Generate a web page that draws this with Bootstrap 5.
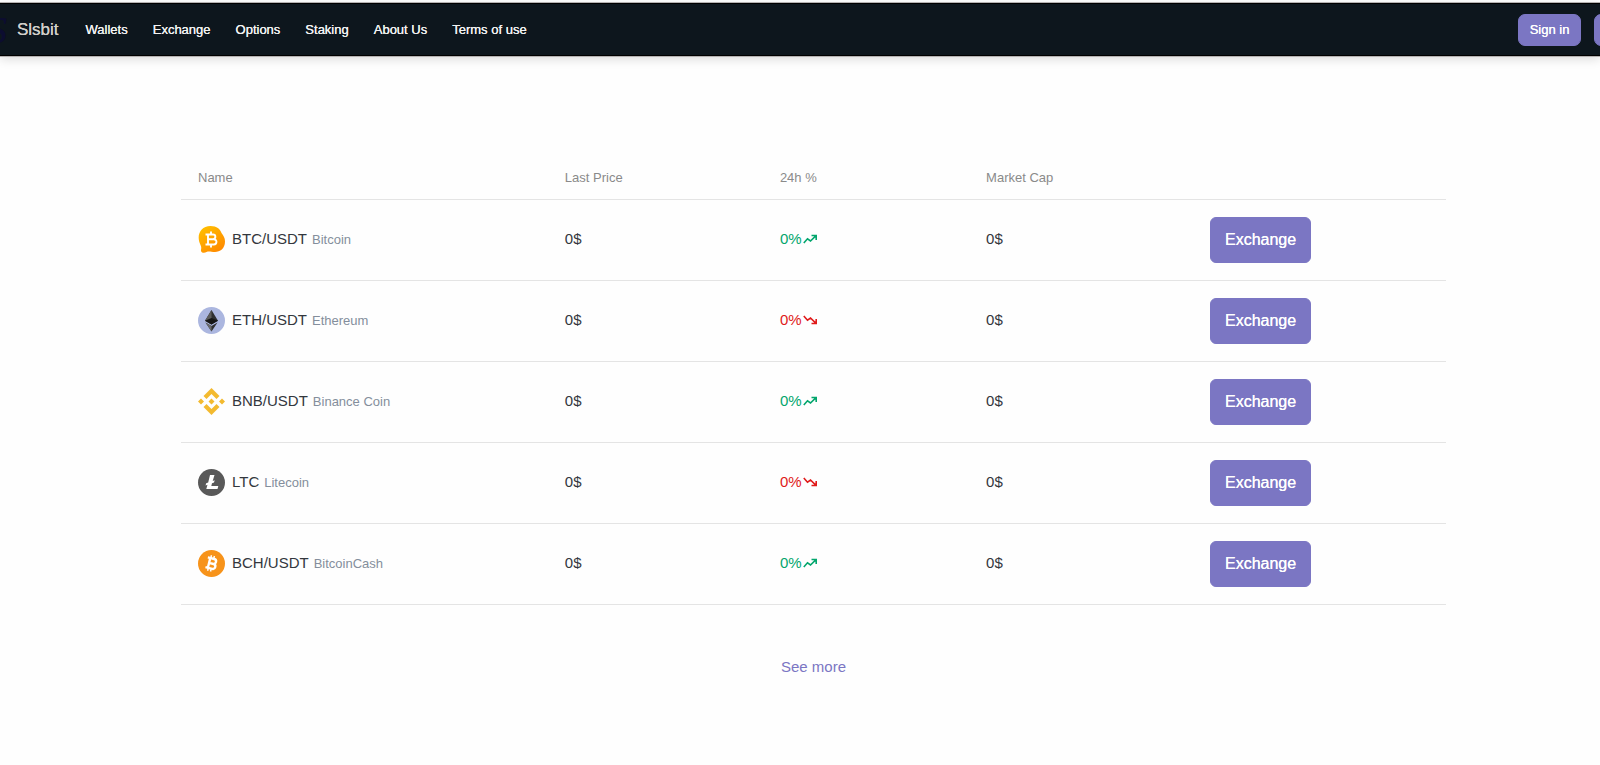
<!DOCTYPE html>
<html lang="en">
<head>
<meta charset="utf-8">
<meta name="viewport" content="width=device-width, initial-scale=1">
<title>Slsbit</title>
<link href="https://cdn.jsdelivr.net/npm/bootstrap@5.3.0/dist/css/bootstrap.min.css" rel="stylesheet">
<style>
  :root { --brand: #7b76c3; --ink: #33373d; --muted: #848e9c; }
  body { font-family: "Liberation Sans", Arial, sans-serif; font-size: 15px; color: var(--ink); background: #fefefe; overflow-x: hidden; }
  .topbar { height: 53px; margin-top: 3px; background: #0d161d; border-top: 1px solid #000; border-bottom: 1px solid #000; outline: 1px solid #b5b2b2; box-shadow: 0 3px 10px rgba(0,0,0,.14); overflow: hidden; }
  .topbar a, .topbar button { text-shadow: 0 0 0 currentColor; white-space: nowrap; }
  .brand-mark { font: italic 38px/1 "Liberation Serif", serif; color: #0c0d30; margin-left: -12px; width: 29px; }
  .brand-name { font-size: 17px; color: #d2cfca; }
  .menu { gap: 25px; margin-left: 27px; font-size: 13px; }
  .menu a { color: #f2f2f2; }
  .btn-brand { --bs-btn-color: #fff; --bs-btn-bg: var(--brand); --bs-btn-border-color: var(--brand); --bs-btn-hover-color: #fff; --bs-btn-hover-bg: #6a65b5; --bs-btn-hover-border-color: #6a65b5; --bs-btn-border-radius: 6px; font-size: 16px; height: 46px; padding: 0 14px; text-shadow: 0 0 0 currentColor; }
  .account { gap: 13px; margin-right: -57px; }
  .account .btn-brand { --bs-btn-border-radius: 7px; font-size: 13px; height: 32px; width: 63px; padding: 0; }
  .market { max-width: 1265px; margin: 95px auto 0; }
  .shift { padding-left: 27px; }
  .coins { table-layout: fixed; --bs-table-bg: transparent; --bs-table-color: var(--ink); border-color: #e4e4e4; }
  .coins > :not(caption) > * > * { padding: 0 17px; vertical-align: middle; }
  .coins > thead > tr > th { height: 48px; font-size: 13px; font-weight: 400; color: #8a8a8a; padding-top: 5px; }
  .coins td { height: 81px; }
  .coins .up { color: #03a66d; } .coins .down { color: #e01a1a; }
  .coin-icon { width: 27px; height: 27px; margin-right: 7px; }
  .trend { width: 14px; height: 10px; margin-left: 1px; vertical-align: 0; }
  .full-name { font-size: 13px; color: var(--muted); margin-left: 5px; }
  .more { color: var(--brand); margin-top: 51px; }
  .c1 { width: 29%; } .c2 { width: 17%; } .c3 { width: 16.3%; } .c4 { width: 17.7%; } .c5 { width: 20%; }
</style>
</head>
<body>
<svg class="d-none" aria-hidden="true">
  <symbol id="rise" viewBox="0 0 14 10"><path d="M.8 9 4.500 4.800 7.500 7 12.500 2.200M8.500 1.500h4.700v4.500" fill="none" stroke="currentColor" stroke-width="1.6"/></symbol>
  <symbol id="fall" viewBox="0 0 14 10"><path d="M.8 1 4.500 5.200 7.500 3 12.500 7.800M8.500 8.500h4.700V4" fill="none" stroke="currentColor" stroke-width="1.6"/></symbol>
</svg>

<nav class="topbar d-flex align-items-center">
  <a class="brand-mark flex-shrink-0 text-decoration-none" href="#" aria-label="Home">S</a>
  <a class="brand-name text-decoration-none" href="#">Slsbit</a>
  <div class="menu d-flex">
    <a class="text-decoration-none" href="#">Wallets</a>
    <a class="text-decoration-none" href="#">Exchange</a>
    <a class="text-decoration-none" href="#">Options</a>
    <a class="text-decoration-none" href="#">Staking</a>
    <a class="text-decoration-none" href="#">About Us</a>
    <a class="text-decoration-none" href="#">Terms of use</a>
  </div>
  <div class="account d-flex ms-auto flex-shrink-0">
    <button type="button" class="btn btn-brand">Sign in</button>
    <button type="button" class="btn btn-brand" aria-label="Register"></button>
  </div>
</nav>

<main class="shift">
  <section class="market">
    <table class="table coins mb-0">
      <thead>
        <tr><th class="c1" scope="col">Name</th><th class="c2" scope="col">Last Price</th><th class="c3" scope="col">24h %</th><th class="c4" scope="col">Market Cap</th><th class="c5"></th></tr>
      </thead>
      <tbody>
        <tr>
          <td><div class="d-flex align-items-center">
            <svg class="coin-icon" viewBox="0 0 27 27"><defs><linearGradient id="gold" x1="0" y1="0" x2=".7" y2="1"><stop offset="0" stop-color="#ffc400"/><stop offset="1" stop-color="#ff8a00"/></linearGradient></defs><path d="M12.500 0C19 0 22 3 23.500 7c2 3 3.500 5 3.500 8.500 0 7-5 10.500-10 10.500-4 0-6-1-8.500 0-2 1.500-6 1-5.500-2 .3-2 .5-3-.5-5C-2 10 2 0 12.500 0Z" fill="url(#gold)"/><path d="M7.500 8.500H15a2.200 2.200 0 0 1 0 4.700h-5 5.800a2.500 2.500 0 0 1 0 5.300H7.500M10 8.500v10M13 5.500v3M13 18.500v3" fill="none" stroke="#fff" stroke-width="1.900"/></svg>
            <span>BTC/USDT</span><span class="full-name">Bitcoin</span></div></td>
          <td>0$</td>
          <td class="up">0%<svg class="trend"><use href="#rise"/></svg></td>
          <td>0$</td>
          <td><button type="button" class="btn btn-brand">Exchange</button></td>
        </tr>
        <tr>
          <td><div class="d-flex align-items-center">
            <svg class="coin-icon" viewBox="0 0 27 27"><circle cx="13.500" cy="13.500" r="13.500" fill="#abb6df"/><path d="M13.500 3 20 13.800 13.500 17.500 7 13.800Z" fill="#2e2f31"/><path d="M13.500 3v14.500L7 13.800Z" fill="#5c5c5a"/><path d="M13.500 11 20 13.800 13.500 17.500 7 13.800Z" fill="#161616"/><path d="m7.500 15.500 6 3.500 6-3.500-6 9Z" fill="#303030"/><path d="m7.500 15.500 6 3.500v5.500Z" fill="#6a6b6d"/></svg>
            <span>ETH/USDT</span><span class="full-name">Ethereum</span></div></td>
          <td>0$</td>
          <td class="down">0%<svg class="trend"><use href="#fall"/></svg></td>
          <td>0$</td>
          <td><button type="button" class="btn btn-brand">Exchange</button></td>
        </tr>
        <tr>
          <td><div class="d-flex align-items-center">
            <svg class="coin-icon" viewBox="0 0 27 27" fill="#f3ba2f"><path d="m13.500 0 8 8-3 3-5-5-5 5-3-3ZM13.500 27l8-8-3-3-5 5-5-5-3 3ZM3 10.500l3 3-3 3-3-3ZM24 10.500l3 3-3 3-3-3ZM13.500 10.500l3 3-3 3-3-3Z"/></svg>
            <span>BNB/USDT</span><span class="full-name">Binance Coin</span></div></td>
          <td>0$</td>
          <td class="up">0%<svg class="trend"><use href="#rise"/></svg></td>
          <td>0$</td>
          <td><button type="button" class="btn btn-brand">Exchange</button></td>
        </tr>
        <tr>
          <td><div class="d-flex align-items-center">
            <svg class="coin-icon" viewBox="0 0 27 27"><circle cx="13.500" cy="13.500" r="13.500" fill="#595959"/><path d="M12 6h4.500l-1.800 6 2-.8-.7 2.200-2 .8-.7 2.800h7l-.8 3H8.300l1.200-4.300-2 .8.700-2.300 2-.8Z" fill="#fff"/></svg>
            <span>LTC</span><span class="full-name">Litecoin</span></div></td>
          <td>0$</td>
          <td class="down">0%<svg class="trend"><use href="#fall"/></svg></td>
          <td>0$</td>
          <td><button type="button" class="btn btn-brand">Exchange</button></td>
        </tr>
        <tr>
          <td><div class="d-flex align-items-center">
            <svg class="coin-icon" viewBox="0 0 27 27"><circle cx="13.500" cy="13.500" r="13.500" fill="#f7931a"/><g transform="rotate(14 13.500 13.500)" fill="none" stroke="#fff"><path d="M8.500 8.500H15a2.300 2.300 0 0 1 0 5h-4 4.500a2.500 2.500 0 0 1 0 5h-7M11 8.500v10" stroke-width="2.400"/><path d="M11.500 5.500v3M14.500 5.500v3M11.500 18.500v3M14.500 18.500v3" stroke-width="1.500"/></g></svg>
            <span>BCH/USDT</span><span class="full-name">BitcoinCash</span></div></td>
          <td>0$</td>
          <td class="up">0%<svg class="trend"><use href="#rise"/></svg></td>
          <td>0$</td>
          <td><button type="button" class="btn btn-brand">Exchange</button></td>
        </tr>
      </tbody>
    </table>
    <div class="text-center"><a class="more d-inline-block text-decoration-none" href="#">See more</a></div>
  </section>
</main>
<script src="https://cdn.jsdelivr.net/npm/bootstrap@5.3.0/dist/js/bootstrap.bundle.min.js"></script>
</body>
</html>
